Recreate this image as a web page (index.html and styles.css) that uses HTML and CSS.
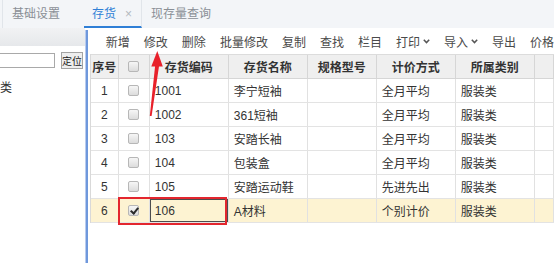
FILE: index.html
```html
<!DOCTYPE html>
<html lang="zh-CN">
<head>
    <meta charset="UTF-8">
    <title>存货</title>
<link rel="stylesheet" href="styles.css">
</head>
<body>

<div class="tabbar">
    <div class="tab first">基础设置</div>
    <div class="tab active">存货<span class="close">×</span></div>
    <div class="tab">现存量查询</div>
</div>

<div class="main">
    <div class="side">
        <div class="side-head"></div>
        <div class="search">
            <input class="search-input" type="text">
            <button class="locate">定位</button>
        </div>
        <div class="tree-item">类</div>
    </div>
    <div class="splitter"></div>
    <div class="content">
        <div class="toolbar">
            <span class="tool">新增</span>
            <span class="tool">修改</span>
            <span class="tool">删除</span>
            <span class="tool">批量修改</span>
            <span class="tool">复制</span>
            <span class="tool">查找</span>
            <span class="tool">栏目</span>
            <span class="tool">打印<svg class="chev" width="7" height="5" viewBox="0 0 7 5"><polyline points="0.8,0.8 3.5,3.6 6.2,0.8" fill="none" stroke="#555" stroke-width="1.5"/></svg></span>
            <span class="tool">导入<svg class="chev" width="7" height="5" viewBox="0 0 7 5"><polyline points="0.8,0.8 3.5,3.6 6.2,0.8" fill="none" stroke="#555" stroke-width="1.5"/></svg></span>
            <span class="tool">导出</span>
            <span class="tool">价格</span>
        </div>
        <div class="grid">
            <div class="row head">
                <div class="cell center">序号</div>
                <div class="cell center"><span class="cb"></span></div>
                <div class="cell center">存货编码</div>
                <div class="cell center">存货名称</div>
                <div class="cell center">规格型号</div>
                <div class="cell center">计价方式</div>
                <div class="cell center">所属类别</div>
                <div class="cell"></div>
            </div>
            <div class="row">
                <div class="cell center">1</div>
                <div class="cell center"><span class="cb"></span></div>
                <div class="cell">1001</div>
                <div class="cell">李宁短袖</div>
                <div class="cell"></div>
                <div class="cell">全月平均</div>
                <div class="cell">服装类</div>
                <div class="cell"></div>
            </div>
            <div class="row">
                <div class="cell center">2</div>
                <div class="cell center"><span class="cb"></span></div>
                <div class="cell">1002</div>
                <div class="cell">361短袖</div>
                <div class="cell"></div>
                <div class="cell">全月平均</div>
                <div class="cell">服装类</div>
                <div class="cell"></div>
            </div>
            <div class="row">
                <div class="cell center">3</div>
                <div class="cell center"><span class="cb"></span></div>
                <div class="cell">103</div>
                <div class="cell">安踏长袖</div>
                <div class="cell"></div>
                <div class="cell">全月平均</div>
                <div class="cell">服装类</div>
                <div class="cell"></div>
            </div>
            <div class="row">
                <div class="cell center">4</div>
                <div class="cell center"><span class="cb"></span></div>
                <div class="cell">104</div>
                <div class="cell">包装盒</div>
                <div class="cell"></div>
                <div class="cell">全月平均</div>
                <div class="cell">服装类</div>
                <div class="cell"></div>
            </div>
            <div class="row">
                <div class="cell center">5</div>
                <div class="cell center"><span class="cb"></span></div>
                <div class="cell">105</div>
                <div class="cell">安踏运动鞋</div>
                <div class="cell"></div>
                <div class="cell">先进先出</div>
                <div class="cell">服装类</div>
                <div class="cell"></div>
            </div>
            <div class="row selected">
                <div class="cell center">6</div>
                <div class="cell center"><span class="cb checked"></span></div>
                <div class="cell editing">106</div>
                <div class="cell">A材料</div>
                <div class="cell"></div>
                <div class="cell">个别计价</div>
                <div class="cell">服装类</div>
                <div class="cell"></div>
                <div class="mark"></div>
            </div>
        </div>
    </div>
</div>

<svg class="arrow" width="554" height="263" viewBox="0 0 554 263">
    <polygon points="157.3,51 151.3,66.5 162.8,66.5" fill="#e8202a"/>
    <polygon points="155.2,65 159.2,65 151.6,116 149.8,116" fill="#e8202a"/>
</svg>

</body>
</html>
```

FILE: styles.css
```css
body {
    margin: 0;
    width: 554px;
    height: 263px;
    overflow: hidden;
    position: relative;
    font-family: "Liberation Sans", "Noto Sans CJK SC", sans-serif;
    font-size: 12px;
    color: #333;
    background: #fff;
}

/* tabs */
.tabbar {
    display: flex;
    height: 28px;
    background: #f3f5f8;
}

.tab {
    height: 28px;
    line-height: 28px;
    padding: 0 9px;
    color: #8a8f96;
    box-sizing: border-box;
}

.tab.first {
    margin-left: 2px;
    border-left: 1px solid #e1e5ea;
    padding-right: 24px;
}

.tab.active {
    padding: 0 9px 0 8px;
    color: #2f7fd6;
    border-bottom: 2px solid #2f7fd6;
    border-right: 1px solid #e1e5ea;
}

.close {
    margin-left: 9px;
    color: #b4b8be;
}

/* layout */
.main {
    display: flex;
    height: 235px;
}

.side {
    width: 87px;
    overflow: hidden;
}

.side-head {
    height: 18px;
    background: linear-gradient(#f1f2f4, #e6e8eb);
}

.search {
    display: flex;
    align-items: center;
    height: 22px;
    margin-top: 3px;
}

.search-input {
    width: 60px;
    height: 15px;
    margin: 0 0 0 -5px;
    padding: 0;
    border: 1px solid #a9a9a9;
    box-sizing: border-box;
}

.locate {
    width: 22px;
    height: 17px;
    margin-left: 6px;
    padding: 0;
    font-family: inherit;
    font-size: 10px;
    white-space: nowrap;
    color: #222;
    background: #eeeeee;
    border: 1px solid #a3a3a3;
}

.tree-item {
    margin-top: 9px;
    line-height: 16px;
    white-space: nowrap;
}

.splitter {
    width: 3px;
    margin-top: 2px;
    background: #6f98dc;
    border-left: 1px solid #b8cbee;
    box-sizing: border-box;
}

.content {
    flex: 1;
    padding-left: 2px;
}

/* toolbar */
.toolbar {
    display: flex;
    align-items: center;
    gap: 14px;
    height: 26px;
    padding-left: 16px;
    color: #4a4a4a;
    white-space: nowrap;
}

.tool {
    display: flex;
    align-items: center;
}

.chev {
    margin-left: 3px;
}

/* grid */
.grid {
    border-left: 1px solid #d9d9d9;
}

.row {
    display: grid;
    grid-template-columns: 28px 31px 79px 79px 69px 79px 79px 1fr;
    height: 24px;
    border-bottom: 1px solid #e3e3e3;
    box-sizing: border-box;
    position: relative;
}

.row.head {
    height: 25px;
    background: #efefef;
    border-top: 1px solid #dcdcdc;
    border-bottom: 1px solid #d6d6d6;
    font-weight: bold;
}

.cell {
    display: flex;
    align-items: center;
    padding-left: 5px;
    border-right: 1px solid #e1e1e1;
    white-space: nowrap;
    overflow: hidden;
}

.head .cell {
    border-right-color: #d6d6d6;
}

.cell.center {
    justify-content: center;
    padding-left: 0;
}

.cb {
    width: 11px;
    height: 11px;
    border: 1px solid #b7b7b7;
    border-radius: 2px;
    background: linear-gradient(#f6f6f6, #dcdcdc);
    box-sizing: border-box;
    position: relative;
}

.cb.checked::after {
    content: "";
    position: absolute;
    left: 3px;
    top: 0px;
    width: 3px;
    height: 6px;
    border: solid #2b2b2b;
    border-width: 0 2px 2px 0;
    transform: rotate(40deg);
}

.row.selected {
    background: #fdf3d2;
}

.cell.editing {
    box-shadow: inset 0 0 0 1px #4d4d4d;
}

.mark {
    position: absolute;
    left: 27px;
    top: -2px;
    width: 109px;
    height: 28px;
    border: 2px solid #e3262e;
    box-sizing: border-box;
}

.arrow {
    position: absolute;
    left: 0;
    top: 0;
    pointer-events: none;
}
```
